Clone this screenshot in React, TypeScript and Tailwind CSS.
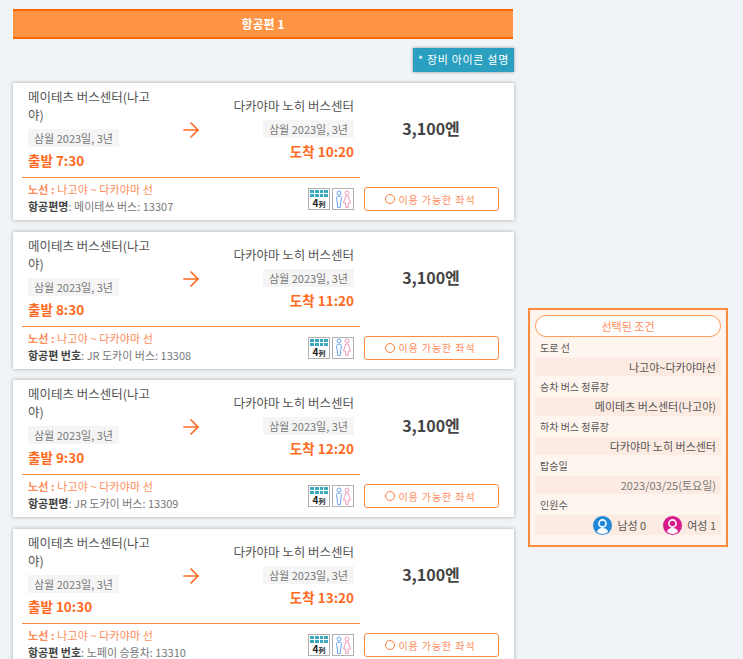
import { ArrowRight } from "lucide-react";

const trips = [
  { dep: "7:30", arr: "10:20", label: "항공편명", bus: "메이테쓰 버스", no: "13307" },
  { dep: "8:30", arr: "11:20", label: "항공편 번호", bus: "JR 도카이 버스", no: "13308" },
  { dep: "9:30", arr: "12:20", label: "항공편명", bus: "JR 도카이 버스", no: "13309" },
  { dep: "10:30", arr: "13:20", label: "항공편 번호", bus: "노페이 승용차", no: "13310" },
];

function SeatIcon() {
  return (
    <div className="flex h-[22px] w-[22px] flex-col items-center border-[1.5px] border-[#b0b0b0] bg-white px-px pt-px">
      <div className="grid w-full grid-cols-4 gap-px">
        {Array.from({ length: 8 }).map((_, i) => (
          <div key={i} className="h-[3px] bg-[#3aa9bf]" />
        ))}
      </div>
      <div className="text-[10px] leading-[11px] font-bold text-[#222222]">
        4<span className="text-[7px]">列</span>
      </div>
    </div>
  );
}

function ToiletIcon() {
  return (
    <div className="flex h-[22px] w-[22px] items-center justify-center border-[1.5px] border-[#b0b0b0] bg-white">
      <svg width="18" height="19" viewBox="0 0 18 19" fill="none" strokeWidth="1">
        <circle cx="5" cy="3" r="2" stroke="#6aa5f2" />
        <path d="M2.500 7.500c0-1.800 5-1.800 5 0l-.8 5.500-.4 4.500H3.700l-.4-4.500z" stroke="#6aa5f2" />
        <circle cx="13" cy="3" r="2" stroke="#f29abc" />
        <path d="M11.800 6h2.400l2.300 7h-2.200l-.2 4.500h-2.200l-.2-4.500H9.500z" stroke="#f29abc" />
      </svg>
    </div>
  );
}

function UserBadge({ color }: { color: string }) {
  return (
    <svg width="19" height="19" viewBox="0 0 19 19">
      <circle cx="9.500" cy="9.500" r="9.500" fill={color} />
      <circle cx="9.500" cy="7.500" r="3.600" fill="none" stroke="white" strokeWidth="1.600" />
      <path d="M4 16c.5-3 2.500-4 5.500-4s5 1 5.500 4a9 9 0 0 1-11 0z" fill="white" />
    </svg>
  );
}

function TripCard({ dep, arr, label, bus, no }: (typeof trips)[number]) {
  return (
    <div className="h-[137px] bg-white shadow-[0_0_4px_rgba(0,0,0,0.3)]">
      <div className="flex">
        <div className="ml-[9px] flex h-[95px] w-[338px] border-b border-[#ff8c42]">
          <div className="ml-[6px] w-[128px] pt-[5px]">
            <div className="text-[12.500px] leading-[18px] text-[#555555]">메이테츠 버스센터(나고야)</div>
            <div className="mt-[5px] inline-block bg-[#f5f5f5] px-[6px] text-[11px] leading-[18px] text-[#777777]">
              삼월 2023일, 3년
            </div>
            <div className="mt-[1px] text-[13.500px] leading-[22px] font-bold text-[#ff6a22]">출발 {dep}</div>
          </div>
          <div className="flex w-[70px] items-start justify-center pt-[35px]">
            <ArrowRight size={24} strokeWidth={1.7} className="text-[#ff6a22]" />
          </div>
          <div className="flex w-[128px] flex-col items-end pt-[14px]">
            <div className="text-[12.500px] leading-[18px] whitespace-nowrap text-[#555555]">다카야마 노히 버스센터</div>
            <div className="mt-[5px] bg-[#f5f5f5] px-[6px] text-[11px] leading-[18px] text-[#777777]">
              삼월 2023일, 3년
            </div>
            <div className="mt-[2px] text-[13.500px] leading-[22px] font-bold text-[#ff6a22]">도착 {arr}</div>
          </div>
        </div>
        <div className="flex-1 pt-[32px] pr-[12px] text-center text-[16px] leading-[26px] font-bold text-[#444444]">
          3,100엔
        </div>
      </div>
      <div className="flex">
        <div className="ml-[15px] w-[280px] pt-[2px]">
          <div className="text-[11px] leading-[18px] tracking-[0.1px] text-[#ff8c5a]">
            <b>노선 :</b> 나고야 ~ 다카야마 선
          </div>
          <div className="mt-[2px] text-[11px] leading-[13px] text-[#777777]">
            <b className="text-[#444444]">{label}</b>: {bus}: {no}
          </div>
        </div>
        <div className="mt-[10px] flex h-[22px] gap-[2px]">
          <SeatIcon />
          <ToiletIcon />
        </div>
        <button className="mt-[9px] ml-[10px] flex h-[24px] w-[135px] items-center justify-center gap-[4px] rounded-[3px] border border-[#ff8c42] bg-white pr-[3px] text-[10px] tracking-[0.9px] text-[#ff8c5a]">
          <span className="h-[10px] w-[10px] rounded-full border-[1.5px] border-[#ff7a3a]" />
          이용 가능한 좌석
        </button>
      </div>
    </div>
  );
}

function Field({ label, children, className = "text-[#555555]" }: { label: string; children: React.ReactNode; className?: string }) {
  return (
    <div>
      <div className="pl-[5px] text-[10px] leading-[21px] text-[#555555]">{label}</div>
      <div className={`h-[18.300px] bg-[#fcebe2] pr-[5px] text-right text-[11px] leading-[18px] ${className}`}>{children}</div>
    </div>
  );
}

export default function App() {
  return (
    <div className="flex h-[659px] overflow-hidden bg-[#f0f4f6] pt-[9px] pl-[13px] font-['Noto_Sans_CJK_KR','Noto_Sans',sans-serif]">
      <div className="w-[501px] shrink-0">
        <div className="mr-px h-[30px] border-t-[2px] border-b-[2px] border-[#ff6600] bg-[#ff9544] text-center text-[12px] leading-[26px] font-bold text-white">
          항공편 1
        </div>
        <div className="mt-[9px] flex justify-end">
          <div className="h-[24px] bg-[#2a9fc0] px-[5px] text-[11px] leading-[23px] tracking-[0.7px] text-white shadow-[0_0_3px_rgba(0,0,0,0.4)]">
            * 장비 아이콘 설명
          </div>
        </div>
        <div className="mt-[11px] flex flex-col gap-[11.700px]">
          {trips.map((t) => (
            <TripCard key={t.no} {...t} />
          ))}
        </div>
      </div>
      <div className="mt-[299px] ml-[14px] h-[239px] w-[200px] border-[2px] border-[#ff8c3c] bg-[#fff5ef] px-[5px] pt-[5px]">
        <div className="h-[22px] rounded-full border border-[#ff9c5a] bg-white text-center text-[11px] leading-[20px] text-[#ff8c5a]">
          선택된 조건
        </div>
        <Field label="도로 선">나고야~다카야마선</Field>
        <Field label="승차 버스 정류장">메이테츠 버스센터(나고야)</Field>
        <Field label="하차 버스 정류장">다카야마 노히 버스센터</Field>
        <Field label="탑승일" className="text-[#777777]">2023/03/25(토요일)</Field>
        <div>
          <div className="pl-[5px] text-[10px] leading-[21px] text-[#555555]">인원수</div>
          <div className="flex h-[20px] items-center justify-end gap-[17px] bg-[#fcebe2] pr-[5px] text-[11px] text-[#555555]">
            <span className="flex items-center gap-[5px]">
              <UserBadge color="#1f88d8" /> 남성 0
            </span>
            <span className="flex items-center gap-[5px]">
              <UserBadge color="#d81b8c" /> 여성 1
            </span>
          </div>
        </div>
      </div>
    </div>
  );
}
